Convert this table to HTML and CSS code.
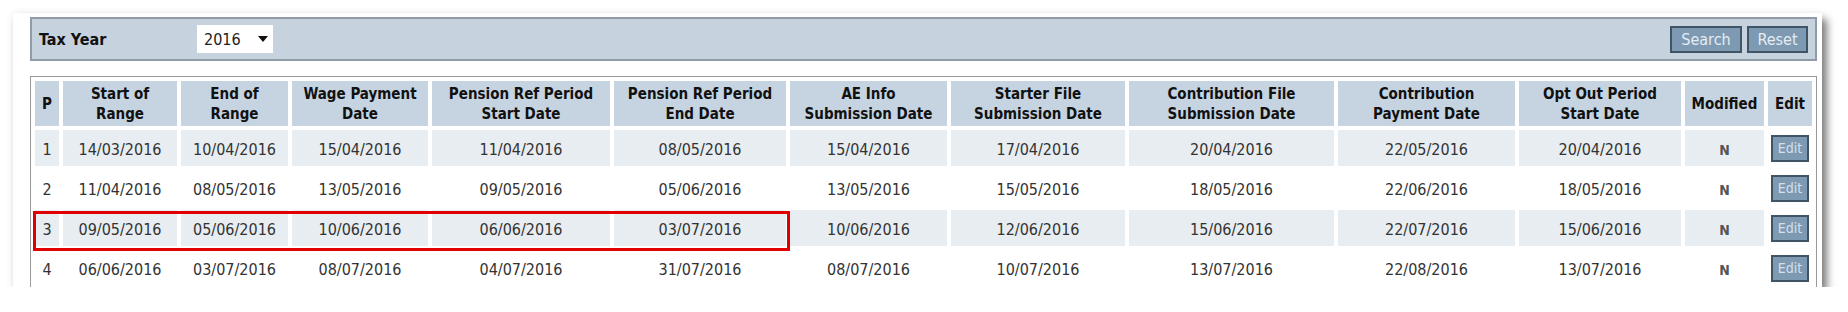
FILE: index.html
```html
<!DOCTYPE html>
<html>
<head>
<meta charset="utf-8">
<link rel="stylesheet" href="styles.css">
</head>
<body>
<div class="card">
  <div class="filter">
    <span class="lbl">Tax Year</span>
    <div class="select"><span>2016</span><span class="caret"></span></div>
    <div class="spacer"></div>
    <button class="btn btn-search">Search</button>
    <button class="btn btn-reset">Reset</button>
  </div>
  <div class="tablewrap">
    <table class="grid">
      <colgroup>
        <col class="c-p"><col class="c-start"><col class="c-end"><col class="c-wage"><col class="c-pstart"><col class="c-pend"><col class="c-ae"><col class="c-starter"><col class="c-cfile"><col class="c-cpay"><col class="c-opt"><col class="c-mod"><col class="c-edit">
      </colgroup>
      <thead>
        <tr>
          <th>P</th><th>Start of<br>Range</th><th>End of<br>Range</th><th>Wage Payment<br>Date</th><th>Pension Ref Period<br>Start Date</th><th>Pension Ref Period<br>End Date</th><th>AE Info<br>Submission Date</th><th>Starter File<br>Submission Date</th><th>Contribution File<br>Submission Date</th><th>Contribution<br>Payment Date</th><th>Opt Out Period<br>Start Date</th><th>Modified</th><th>Edit</th>
        </tr>
      </thead>
      <tbody>
        <tr class="odd">
          <td>1</td><td>14/03/2016</td><td>10/04/2016</td><td>15/04/2016</td><td>11/04/2016</td><td>08/05/2016</td><td>15/04/2016</td><td>17/04/2016</td><td>20/04/2016</td><td>22/05/2016</td><td>20/04/2016</td><td class="mod">N</td><td class="ecell"><button class="edit">Edit</button></td>
        </tr>
        <tr>
          <td>2</td><td>11/04/2016</td><td>08/05/2016</td><td>13/05/2016</td><td>09/05/2016</td><td>05/06/2016</td><td>13/05/2016</td><td>15/05/2016</td><td>18/05/2016</td><td>22/06/2016</td><td>18/05/2016</td><td class="mod">N</td><td class="ecell"><button class="edit">Edit</button></td>
        </tr>
        <tr class="odd">
          <td>3</td><td>09/05/2016</td><td>05/06/2016</td><td>10/06/2016</td><td>06/06/2016</td><td>03/07/2016</td><td>10/06/2016</td><td>12/06/2016</td><td>15/06/2016</td><td>22/07/2016</td><td>15/06/2016</td><td class="mod">N</td><td class="ecell"><button class="edit">Edit</button></td>
        </tr>
        <tr>
          <td>4</td><td>06/06/2016</td><td>03/07/2016</td><td>08/07/2016</td><td>04/07/2016</td><td>31/07/2016</td><td>08/07/2016</td><td>10/07/2016</td><td>13/07/2016</td><td>22/08/2016</td><td>13/07/2016</td><td class="mod">N</td><td class="ecell"><button class="edit">Edit</button></td>
        </tr>
      </tbody>
    </table>
    <div class="highlight"></div>
  </div>
</div>
</body>
</html>
```

FILE: styles.css
```css
html, body {
  margin: 0;
  padding: 0;
  background: #ffffff;
}

body {
  padding: 13px 0 0 13px;
  font-family: "DejaVu Sans Condensed", "DejaVu Sans", Tahoma, sans-serif;
  color: #333;
}

.card {
  width: 1809px;
  height: 274px;
  overflow: hidden;
  box-sizing: border-box;
  background: #fff;
  padding: 4px 0 0 17px;
  box-shadow: 5px 6px 8px rgba(0, 0, 0, 0.5), 0 0 8px rgba(0, 0, 0, 0.06);
}

.filter {
  width: 1787px;
  height: 44px;
  box-sizing: border-box;
  border: 2px solid #8f9ca7;
  background: #c6d3df;
  display: flex;
  align-items: center;
  padding: 0 7px 0 7px;
}

.lbl {
  width: 158px;
  font-weight: bold;
  font-size: 16px;
  color: #111;
}

.select {
  width: 76px;
  height: 28px;
  box-sizing: border-box;
  background: #fff;
  display: flex;
  align-items: center;
  padding-left: 7px;
  font-size: 16px;
  color: #222;
}

.caret {
  margin-left: 17px;
  width: 0;
  height: 0;
  border-left: 5px solid transparent;
  border-right: 5px solid transparent;
  border-top: 6px solid #111;
}

.spacer {
  flex: 1;
}

.btn {
  height: 27px;
  box-sizing: border-box;
  border: 2px solid #3f5566;
  background: #7e9ab2;
  color: #e4ecf3;
  font-family: "DejaVu Sans Condensed", "DejaVu Sans", sans-serif;
  font-size: 16px;
  padding: 0;
  margin: 0;
}

.btn-search {
  width: 72px;
}

.btn-reset {
  width: 61px;
  margin-left: 5px;
}

.tablewrap {
  position: relative;
  margin-top: 15px;
  width: 1787px;
}

.grid {
  width: 1787px;
  table-layout: fixed;
  border: 1px solid #9a9a9a;
  border-spacing: 4px;
  font-size: 16px;
}

.c-p { width: 24px; }
.c-start { width: 114px; }
.c-end { width: 107px; }
.c-wage { width: 136px; }
.c-pstart { width: 178px; }
.c-pend { width: 172px; }
.c-ae { width: 157px; }
.c-starter { width: 174px; }
.c-cfile { width: 205px; }
.c-cpay { width: 177px; }
.c-opt { width: 162px; }
.c-mod { width: 79px; }
.c-edit { width: 44px; }

.grid th {
  height: 45px;
  padding: 0;
  background: #c6d4e1;
  color: #111;
  font-weight: bold;
  font-size: 15px;
  line-height: 20px;
  text-align: center;
  vertical-align: middle;
}

.grid td {
  height: 36px;
  box-sizing: border-box;
  padding: 3px 0 0 0;
  text-align: center;
  vertical-align: middle;
  color: #333;
  font-size: 16px;
}

.grid tr.odd td {
  background: #e8edf2;
}

.grid td.mod {
  font-size: 14px;
  font-weight: bold;
  color: #555;
}

.grid td.ecell {
  padding: 0;
}

.grid tr.odd td.ecell {
  background: #fff;
}

.edit {
  width: 38px;
  height: 27px;
  box-sizing: border-box;
  border: 2px solid #3f5566;
  background: #7e9ab2;
  color: #d4e0ea;
  font-family: "DejaVu Sans Condensed", "DejaVu Sans", sans-serif;
  font-size: 14px;
  padding: 0;
  display: block;
  margin: 0 auto;
}

.highlight {
  position: absolute;
  left: 3px;
  top: 135px;
  width: 757px;
  height: 40px;
  box-sizing: border-box;
  border: 3px solid #e00000;
  pointer-events: none;
}
```
